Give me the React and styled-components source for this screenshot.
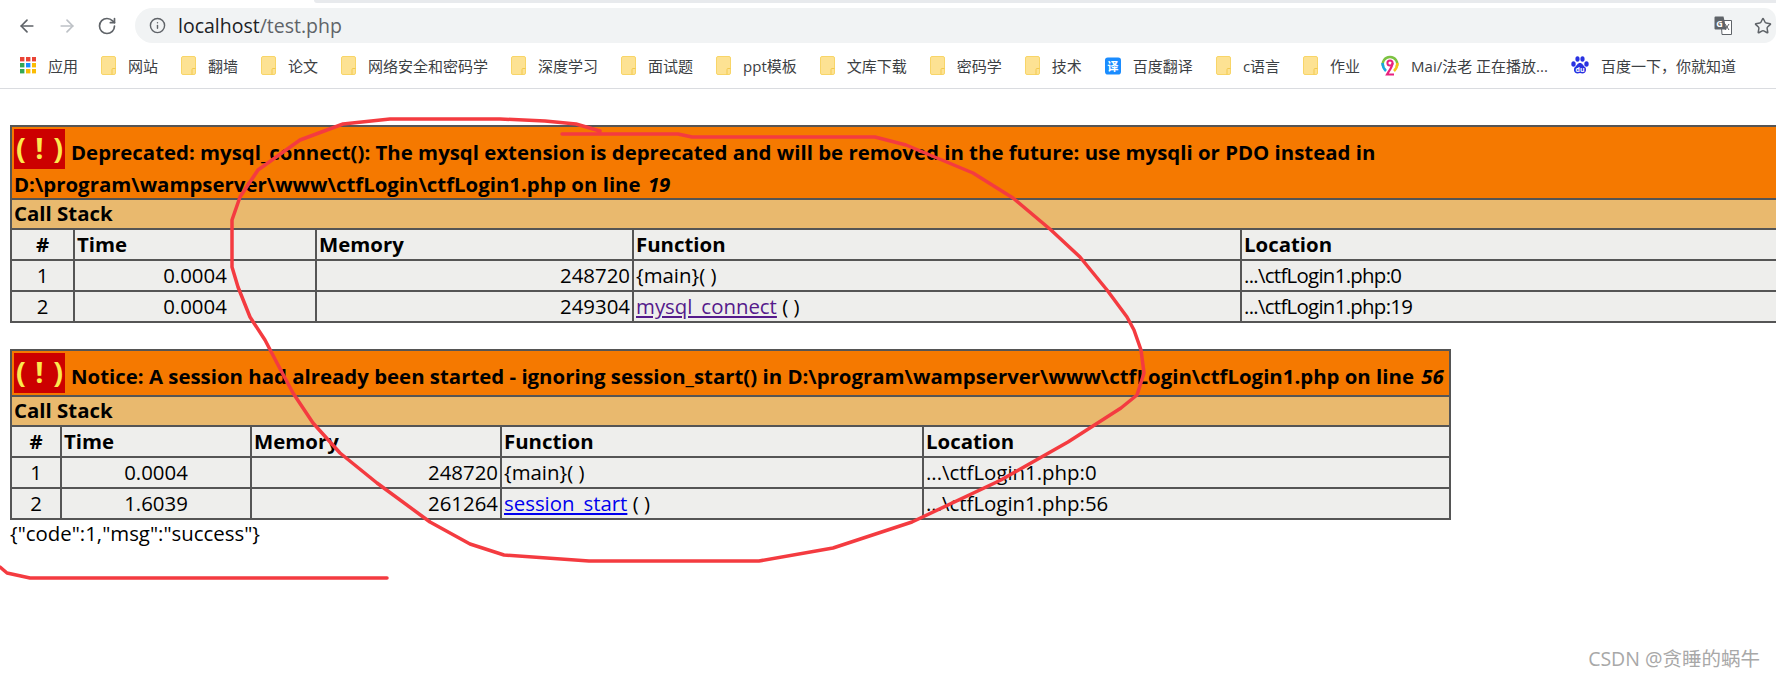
import React from 'react'
import styled, { createGlobalStyle } from 'styled-components'
import { ArrowLeft, ArrowRight, RotateCw, Info, Star } from 'lucide-react'

const GlobalStyle = createGlobalStyle`
  html, body { margin: 0; padding: 0; background: #fff; overflow: hidden; }
  body { font-family: "Open Sans", "Noto Sans CJK SC", sans-serif; color: #000; }
`

const Page = styled.div`
  position: relative;
  width: 1776px;
  height: 677px;
  overflow: hidden;
`

const TabStrip = styled.div`
  height: 3px;
  margin-left: 314px;
  background: #e8eaed;
  border-bottom-left-radius: 3px;
`

const Toolbar = styled.div`
  display: flex;
  align-items: center;
  height: 35px;
  margin-top: 5px;
  padding-left: 17px;
  color: #5f6368;
`

const NavButton = styled.div`
  display: flex;
  width: 40px;
  flex: none;
  color: ${p => (p.$disabled ? '#bdc1c6' : '#5f6368')};
`

const AddressBar = styled.div`
  flex: 1;
  display: flex;
  align-items: center;
  height: 35px;
  margin-left: -2px;
  padding: 0 4px 0 14px;
  background: #f1f3f4;
  border-radius: 18px 12px 12px 18px;
`

const Url = styled.span`
  margin-left: 12px;
  font-size: 19.5px;
  color: #202124;
  & > span { color: #5f6368; }
`

const BarIcons = styled.div`
  margin-left: auto;
  display: flex;
  align-items: center;
  gap: 22px;
`

const Bookmarks = styled.div`
  display: flex;
  align-items: center;
  gap: 23px;
  height: 45px;
  padding-left: 20px;
  border-bottom: 1px solid #dadce0;
  white-space: nowrap;
`

const Bookmark = styled.div`
  display: flex;
  align-items: center;
  gap: 12px;
  margin-left: ${p => (p.$pull ? -2 : 0)}px;
  font-size: 15px;
  line-height: 20px;
  color: #3c4043;
`

const Content = styled.div`
  padding: 36px 0 0 10px;
`

const Stack = styled.table`
  border-collapse: collapse;
  table-layout: fixed;
  width: ${p => p.$width}px;
  margin-bottom: ${p => p.$gap || 0}px;
  font-size: 20.4px;
`

const ErrorCell = styled.th`
  padding: 0 2px;
  background: #f57900;
  border: 2px solid #555;
  text-align: left;
  font-weight: 700;
  line-height: 27px;
  & i { margin-left: 2px; }
`

const Bang = styled.span`
  display: inline-block;
  overflow: hidden;
  width: 51px;
  height: 40px;
  margin: 2px 6px 2px 0;
  background: #cc0000;
  color: #fce94f;
  font-size: 29px;
  line-height: 38px;
  word-spacing: 2px;
  text-align: center;
  vertical-align: -11px;
  white-space: pre;
`

const StackTitle = styled.th`
  height: 26px;
  padding: 0 2px 2px;
  background: #e9b96e;
  border: 2px solid #555;
  text-align: left;
  line-height: 26px;
`

const HeadCell = styled.th`
  height: 29px;
  padding: 0 2px;
  background: #eeeeec;
  border: 2px solid #555;
  text-align: ${p => p.$align || 'left'};
  line-height: 29px;
`

const Cell = styled.td`
  height: 29px;
  padding: 0 2px;
  background: #eeeeec;
  border: 2px solid #555;
  text-align: ${p => p.$align || 'left'};
  letter-spacing: ${p => (p.$tight ? '-0.7px' : 'normal')};
  line-height: 29px;
  white-space: nowrap;
  overflow: hidden;
`

const FuncLink = styled.a`
  color: ${p => (p.$visited ? '#551a8b' : '#0000ee')};
  text-decoration: underline;
`

const Output = styled.div`
  font-size: 20.4px;
  line-height: 26px;
`

const Scribble = styled.svg`
  position: absolute;
  left: 0;
  top: 0;
  pointer-events: none;
`

const Watermark = styled.div`
  position: absolute;
  right: 16px;
  top: 646px;
  font-size: 19.5px;
  line-height: 26px;
  color: #a8a8a8;
`

const FolderIcon = () => (
  <svg width="15" height="19" viewBox="0 0 15 19">
    <rect x="0.5" y="0.5" width="14" height="18" rx="1.5" fill="#fde293" stroke="#f8d568" />
    <path d="M14.5 12.5h-2.5a1 1 0 0 0-1 1v5" fill="none" stroke="#f3c94f" />
  </svg>
)

const AppsIcon = () => (
  <svg width="16" height="17" viewBox="0 0 16 17">
    {[
      ['#ea4335', '#ea4335', '#ea4335'],
      ['#34a853', '#1a8cff', '#fbbc04'],
      ['#34a853', '#fbbc04', '#fbbc04'],
    ].map((row, y) =>
      row.map((c, x) => <rect key={`${x}${y}`} x={x * 6} y={y * 6} width="4.4" height="4.4" fill={c} />)
    )}
  </svg>
)

const FanyiIcon = () => (
  <svg width="16" height="20" viewBox="0 0 17 20">
    <rect y="1" width="17" height="18" rx="3" fill="#1a8cff" />
    <text x="8.5" y="15" textAnchor="middle" fontSize="12" fontWeight="700" fill="#fff" fontFamily="Noto Sans CJK SC, sans-serif">译</text>
  </svg>
)

const MaiIcon = () => (
  <svg width="18" height="22" viewBox="0 0 18 22">
    <path d="M2.5 12A7 7 0 0 1 9 2a7 7 0 0 1 6.500 10" fill="none" stroke="#7cc242" strokeWidth="2.500" />
    <path d="M1.500 8c0 4 1.500 6 3.500 8" fill="none" stroke="#19a7e0" strokeWidth="2.500" />
    <path d="M16.500 8c0 4-1.500 6-3.500 8" fill="none" stroke="#f5c518" strokeWidth="2.500" />
    <circle cx="9" cy="8" r="2.600" fill="none" stroke="#e8217f" strokeWidth="2" />
    <path d="M11.500 8c0 4-3 7-5.500 11.500h7" fill="none" stroke="#e8217f" strokeWidth="2.200" />
  </svg>
)

const PawIcon = () => (
  <svg width="18" height="19" viewBox="0 0 18 19" fill="#2932e1">
    <ellipse cx="2.500" cy="8" rx="2.200" ry="2.800" />
    <ellipse cx="6.500" cy="3" rx="2.100" ry="2.800" />
    <ellipse cx="11.500" cy="3" rx="2.100" ry="2.800" />
    <ellipse cx="15.500" cy="8" rx="2.200" ry="2.800" />
    <path d="M9 7c2.500 0 3 2.500 5 4 2 2 1 6.500-2.500 6.500-1 0-1.500-.4-2.500-.4s-1.500.4-2.500.4C3 17.500 2 13 4 11c2-1.500 2.500-4 5-4z" />
    <text x="9" y="16.200" textAnchor="middle" fontSize="7" fontWeight="700" fill="#fff" fontFamily="Open Sans, sans-serif">du</text>
  </svg>
)

const TranslateIcon = () => (
  <svg width="18" height="19" viewBox="0 0 18 19">
    <path d="M7 4.500h10.500v14H8z" fill="#fff" stroke="#5f6368" strokeWidth="1" />
    <path d="M1.500 0.500h8l3 13H1.500a1 1 0 0 1-1-1V1.500a1 1 0 0 1 1-1z" fill="#5f6368" />
    <text x="5.500" y="10.500" textAnchor="middle" fontSize="9" fontWeight="700" fill="#fff" fontFamily="Open Sans, sans-serif">G</text>
    <path d="M11 8l4 6M15 8l-4 6" stroke="#5f6368" strokeWidth="1" />
  </svg>
)

const bookmarks = [
  ['apps', '应用'], ['folder', '网站'], ['folder', '翻墙'], ['folder', '论文'],
  ['folder', '网络安全和密码学'], ['folder', '深度学习'], ['folder', '面试题'],
  ['folder', 'ppt模板'], ['folder', '文库下载'], ['folder', '密码学'], ['folder', '技术'],
  ['fanyi', '百度翻译'], ['folder', 'c语言'], ['folder', '作业'],
  ['mai', 'Mai/法老 正在播放...'], ['paw', '百度一下，你就知道'],
]

const bookmarkIcons = {
  apps: <AppsIcon />,
  folder: <FolderIcon />,
  fanyi: <FanyiIcon />,
  mai: <MaiIcon />,
  paw: <PawIcon />,
}

const CallStack = ({ width, cols, gap, error, rows, tightLocation }) => (
  <Stack $width={width} $gap={gap}>
    <colgroup>
      {cols.map((c, i) => <col key={i} style={{ width: c }} />)}
    </colgroup>
    <tbody>
      <tr>
        <ErrorCell colSpan="5">
          <Bang>( ! )</Bang>{error}
        </ErrorCell>
      </tr>
      <tr><StackTitle colSpan="5">Call Stack</StackTitle></tr>
      <tr>
        <HeadCell $align="center">#</HeadCell>
        <HeadCell>Time</HeadCell>
        <HeadCell>Memory</HeadCell>
        <HeadCell>Function</HeadCell>
        <HeadCell>Location</HeadCell>
      </tr>
      {rows.map(r => (
        <tr key={r.n}>
          <Cell $align="center">{r.n}</Cell>
          <Cell $align="center">{r.time}</Cell>
          <Cell $align="right">{r.mem}</Cell>
          <Cell>{r.fn}</Cell>
          <Cell $tight={tightLocation}>{r.loc}</Cell>
        </tr>
      ))}
    </tbody>
  </Stack>
)

const App = () => (
  <Page>
    <GlobalStyle />
    <TabStrip />
    <Toolbar>
      <NavButton><ArrowLeft size={20} /></NavButton>
      <NavButton $disabled><ArrowRight size={20} /></NavButton>
      <NavButton><RotateCw size={20} /></NavButton>
      <AddressBar>
        <Info size={17} />
        <Url>localhost<span>/test.php</span></Url>
        <BarIcons>
          <TranslateIcon />
          <Star size={18} />
        </BarIcons>
      </AddressBar>
    </Toolbar>
    <Bookmarks>
      {bookmarks.map(([icon, label]) => (
        <Bookmark key={label} $pull={icon === 'mai'}>
          {bookmarkIcons[icon]}
          {label}
        </Bookmark>
      ))}
    </Bookmarks>
    <Content>
      <CallStack
        width={1800}
        gap={26}
        cols={[63, 242, 317, 608, 570]}
        tightLocation
        error={<>Deprecated: mysql_connect(): The mysql extension is deprecated and will be removed in the future: use mysqli or PDO instead in D:\program\wampserver\www\ctfLogin\ctfLogin1.php on line <i>19</i></>}
        rows={[
          { n: 1, time: '0.0004', mem: 248720, fn: '{main}( )', loc: '...\\ctfLogin1.php:0' },
          { n: 2, time: '0.0004', mem: 249304, fn: <><FuncLink $visited href="#">mysql_connect</FuncLink> ( )</>, loc: '...\\ctfLogin1.php:19' },
        ]}
      />
      <CallStack
        width={1439}
        cols={[50, 190, 250, 422, 527]}
        error={<>Notice: A session had already been started - ignoring session_start() in D:\program\wampserver\www\ctfLogin\ctfLogin1.php on line <i>56</i></>}
        rows={[
          { n: 1, time: '0.0004', mem: 248720, fn: '{main}( )', loc: '...\\ctfLogin1.php:0' },
          { n: 2, time: '1.6039', mem: 261264, fn: <><FuncLink href="#">session_start</FuncLink> ( )</>, loc: '...\\ctfLogin1.php:56' },
        ]}
      />
      <Output>{'{"code":1,"msg":"success"}'}</Output>
    </Content>
    <Scribble width="1776" height="677" viewBox="0 0 1776 677" fill="none" stroke="#f43b40" strokeWidth="3.5" strokeLinejoin="round" strokeLinecap="round">
      <path d="M600 131L576 124L545 121L500 119L390 119L343 124L300 140L258 170L240 197L232 220L232 267L238 287L250 317L265 340L277 363L293 393L313 423L340 453L377 483L430 522L470 544L504 555L589 561L759 561L833 548L912 522L1001 480L1068 442L1121 408L1137 395L1144 373L1141 350L1134 330L1127 317L1107 290L1080 257L1051 230L1013 198L973 173L906 145L875 137L692 137L678 134L562 134" />
      <path d="M0 567L7 573L30 578L387 578" />
    </Scribble>
    <Watermark>CSDN @贪睡的蜗牛</Watermark>
  </Page>
)

export default App
